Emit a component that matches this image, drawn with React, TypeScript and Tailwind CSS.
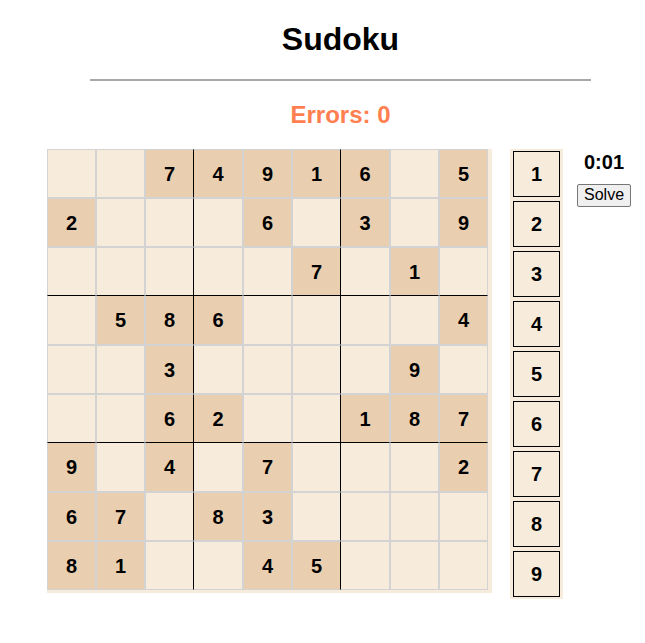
const board: number[][] = [
  [0, 0, 7, 4, 9, 1, 6, 0, 5],
  [2, 0, 0, 0, 6, 0, 3, 0, 9],
  [0, 0, 0, 0, 0, 7, 0, 1, 0],
  [0, 5, 8, 6, 0, 0, 0, 0, 4],
  [0, 0, 3, 0, 0, 0, 0, 9, 0],
  [0, 0, 6, 2, 0, 0, 1, 8, 7],
  [9, 0, 4, 0, 7, 0, 0, 0, 2],
  [6, 7, 0, 8, 3, 0, 0, 0, 0],
  [8, 1, 0, 0, 4, 5, 0, 0, 0],
];

function Cell({ value, row, col }: { value: number; row: number; col: number }) {
  const right = col === 2 || col === 5 ? "border-r-black" : "";
  const left = col === 3 || col === 6 ? "border-l-0" : "";
  const bottom = row === 2 || row === 5 ? "border-b-black" : "";
  const top = row === 3 || row === 6 ? "border-t-0" : "";
  const bg = value ? "bg-[#e9cfb0]" : "bg-[#f7ecdc]";
  return (
    <div
      className={`flex h-[49px] w-[49px] items-center justify-center border border-[#d3d3d3] text-[20px] font-bold ${bg} ${right} ${left} ${bottom} ${top}`}
    >
      {value ? value : ""}
    </div>
  );
}

export default function App() {
  return (
    <div className="min-h-screen bg-white text-black" style={{ fontFamily: '"Liberation Sans", Arial, sans-serif' }}>
      <div className="ml-[36px] text-center">
        <h1 className="my-[21px] text-[32px] font-bold leading-[1.15]">Sudoku</h1>
        <hr className="mx-auto w-[501px] border-t-2 border-[#a8a8a8]" />
        <h2 className="mt-[20px] text-[24px] font-bold leading-[1.15] text-[#ff7f50]">Errors: 0</h2>
      </div>

      <div className="mt-[21px] flex items-start pl-[47px]">
        <div className="bg-[#f7ecdc] pr-[4px] pb-[3px]">
          <div className="grid grid-cols-[repeat(9,49px)]">
            {board.map((r, ri) =>
              r.map((v, ci) => <Cell key={`${ri}-${ci}`} value={v} row={ri} col={ci} />)
            )}
          </div>
        </div>

        <div className="ml-[18px] flex flex-col gap-[4px] bg-[#f7ecdc] px-[3px] pt-[2px] pb-[2px]">
          {[1, 2, 3, 4, 5, 6, 7, 8, 9].map((n) => (
            <div
              key={n}
              className="flex h-[46px] w-[47px] items-center justify-center border border-black text-[20px] font-bold"
            >
              {n}
            </div>
          ))}
        </div>

        <div className="ml-[14px] flex flex-col items-center pt-[2px]">
          <div className="text-[20px] font-bold leading-[1.15]">0:01</div>
          <button className="mt-[10px] rounded-[2px] border border-[#767676] bg-[#efefef] px-[6px] py-[1px] text-[16px] leading-[1.15]">
            Solve
          </button>
        </div>
      </div>
    </div>
  );
}
